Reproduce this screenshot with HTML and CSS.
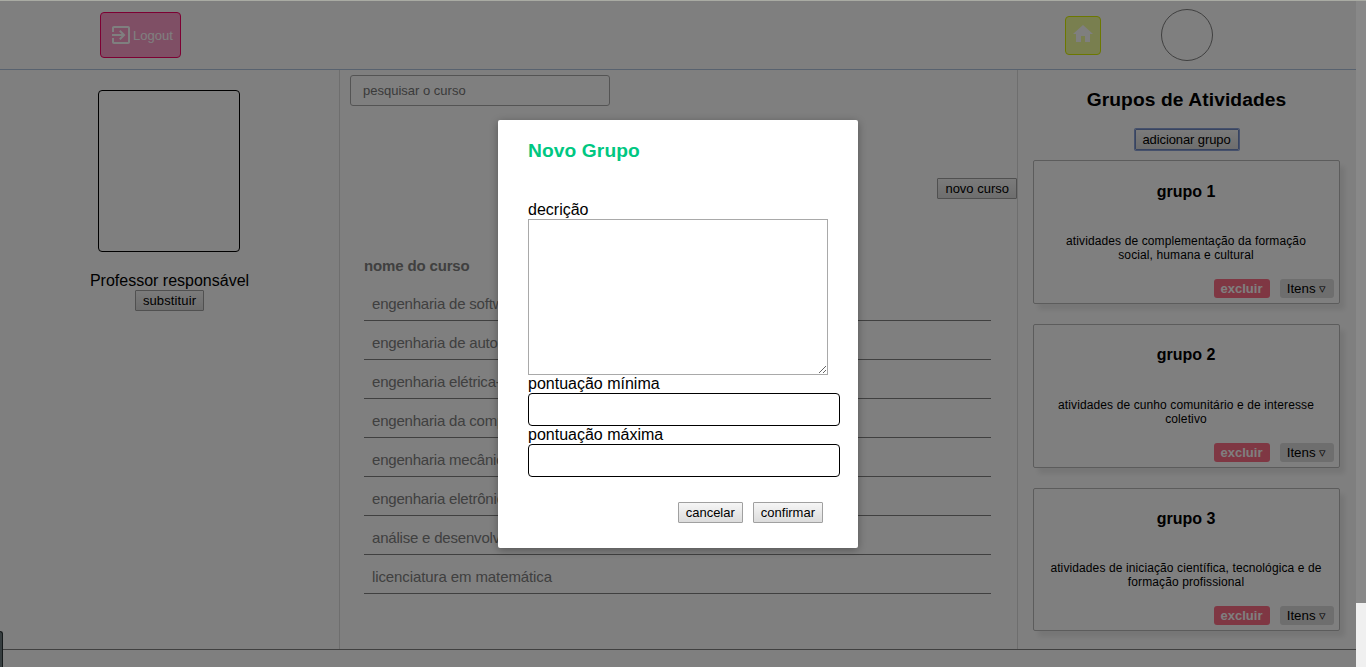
FILE: index.html
```html
<!DOCTYPE html>
<html lang="pt-BR">
<head>
<meta charset="utf-8">
<title>Cursos</title>
<link rel="stylesheet" href="styles.css">
</head>
<body>
<div class="app">
  <header class="header">
    <button class="logout">
      <svg width="24" height="24" viewBox="0 0 24 24" fill="currentColor"><path d="M10.09 15.59L11.5 17l5-5-5-5-1.41 1.41L12.67 11H3v2h9.67l-2.58 2.59zM19 3H5c-1.11 0-2 .9-2 2v4h2V5h14v14H5v-4H3v4c0 1.1.89 2 2 2h14c1.1 0 2-.9 2-2V5c0-1.1-.9-2-2-2z"/></svg><span>Logout</span>
    </button>
    <div class="header-right">
      <a class="home"><svg width="24" height="24" viewBox="0 0 24 24" fill="currentColor"><path d="M10 20v-6h4v6h5v-8h3L12 3 2 12h3v8z"/></svg></a>
      <div class="avatar"></div>
    </div>
  </header>
  <main class="columns">
    <aside class="professor">
      <div class="photo"></div>
      <div class="professor-name">Professor responsável</div>
      <button class="btn wide">substituir</button>
    </aside>
    <section class="courses">
      <input class="search" placeholder="pesquisar o curso">
      <div class="toolbar"><button class="btn">novo curso</button></div>
      <div class="course-table">
        <div class="table-head">nome do curso</div>
        <div class="course">engenharia de software</div>
        <div class="course">engenharia de automação</div>
        <div class="course">engenharia elétrica-eletrônica</div>
        <div class="course">engenharia da computação</div>
        <div class="course">engenharia mecânica</div>
        <div class="course">engenharia eletrônica</div>
        <div class="course">análise e desenvolvimento de sistemas</div>
        <div class="course">licenciatura em matemática</div>
      </div>
    </section>
    <aside class="groups">
      <h2 class="groups-title">Grupos de Atividades</h2>
      <button class="btn focused">adicionar grupo</button>
      <div class="cards">
        <article class="card">
          <h3 class="card-title">grupo 1</h3>
          <p class="card-text">atividades de complementação da formação social, humana e cultural</p>
          <div class="card-actions"><button class="chip danger">excluir</button><button class="chip">Itens ▿</button></div>
        </article>
        <article class="card">
          <h3 class="card-title">grupo 2</h3>
          <p class="card-text">atividades de cunho comunitário e de interesse coletivo</p>
          <div class="card-actions"><button class="chip danger">excluir</button><button class="chip">Itens ▿</button></div>
        </article>
        <article class="card last">
          <h3 class="card-title">grupo 3</h3>
          <p class="card-text">atividades de iniciação científica, tecnológica e de formação profissional</p>
          <div class="card-actions"><button class="chip danger">excluir</button><button class="chip">Itens ▿</button></div>
        </article>
      </div>
    </aside>
  </main>
  <div class="overlay">
    <form class="modal">
      <h2 class="modal-title">Novo Grupo</h2>
      <label class="label">decrição</label>
      <textarea class="area"></textarea>
      <label class="label">pontuação mínima</label>
      <input class="field">
      <label class="label">pontuação máxima</label>
      <input class="field">
      <div class="modal-actions"><button type="button" class="btn">cancelar</button><button type="button" class="btn">confirmar</button></div>
    </form>
  </div>
  <div class="side-tab"></div>
</div>
<div class="scrollbar"><div class="thumb"></div></div>
</body>
</html>
```
FILE: styles.css
```css
* { box-sizing: border-box; }
body {
  margin: 0;
  height: 667px;
  display: flex;
  overflow: hidden;
  background: #fff;
  color: #000;
  font: 16px/18px "Liberation Sans", Arial, sans-serif;
}
button, input, textarea { font-family: inherit; margin: 0; }
.app {
  position: relative;
  width: 1356px;
  height: 667px;
  border-top: 1px solid #a9aba3;
}
.header {
  height: 69px;
  padding: 0 143px 0 100px;
  display: flex;
  justify-content: space-between;
  align-items: center;
  border-bottom: 1px solid #b0c4de;
}
.logout {
  width: 81px;
  height: 46px;
  padding: 0 0 0 8px;
  display: flex;
  align-items: center;
  border: 1px solid #fa0066;
  border-radius: 4px;
  background: #ff9fcb;
  color: #fff;
  font-size: 13px;
}
.logout svg { flex: none; }
.header-right { display: flex; align-items: center; gap: 60px; }
.home {
  width: 36px;
  height: 39px;
  padding: 5px 0 0 5px;
  border: 1px solid #d8f000;
  border-radius: 4px;
  background: #f3ff9f;
  color: #fff;
}
.home svg { display: block; }
.avatar {
  width: 52px;
  height: 52px;
  border: 1px solid #808080;
  border-radius: 50%;
}
.columns {
  height: 580px;
  display: grid;
  grid-template-columns: 340px 677px 339px;
  border-bottom: 1px solid #808080;
}
.professor {
  padding-top: 20px;
  display: flex;
  flex-direction: column;
  align-items: center;
  border-right: 1px solid #dcdcdc;
}
.photo {
  width: 142px;
  height: 162px;
  margin: 0 1px 20px 0;
  border: 1px solid #000;
  border-radius: 4px;
}
.btn {
  height: 21px;
  padding: 0 7px;
  border: 1px solid #a0a0a0;
  border-radius: 1px;
  background: linear-gradient(#f6f6f6, #dcdcdc);
  color: #000;
  font-size: 13px;
  line-height: 19px;
  white-space: nowrap;
}
.wide { width: 69px; padding: 0; letter-spacing: .12px; }
.focused {
  width: 104px;
  padding: 0;
  border-color: #7088c0;
  letter-spacing: -.1px;
  box-shadow: 0 0 0 1px #8ca2d8;
}
.search {
  display: block;
  width: 260px;
  height: 31px;
  margin: 5px 0 0 10px;
  padding: 0 12px;
  border: 1px solid #a9a9a9;
  border-radius: 3px;
  background: #fff;
  font-size: 13px;
}
.search::placeholder { color: #757575; }
.toolbar { margin-top: 72px; display: flex; justify-content: flex-end; }
.course-table {
  margin: 58px 26px 0 24px;
  color: #808080;
  font-size: 15px;
}
.table-head { height: 25px; font-weight: bold; letter-spacing: -.15px; }
.course {
  height: 39px;
  padding: 13px 8px 0;
  border-bottom: 1px solid #808080;
  letter-spacing: -.2px;
}
.course:last-child { letter-spacing: -.1px; }
.groups {
  padding: 19px 1px 0 0;
  display: flex;
  flex-direction: column;
  align-items: center;
  border-left: 1px solid #dcdcdc;
}
.groups-title { margin: 0 0 18px; font-size: 19.2px; line-height: 22px; letter-spacing: .1px; }
.cards {
  width: 307px;
  margin: 10px 1px 0 0;
  display: flex;
  flex-direction: column;
  gap: 20px;
}
.card {
  height: 144px;
  padding: 22px 5px 5px;
  display: flex;
  flex-direction: column;
  border: 1px solid #b8b8b8;
  border-radius: 2px;
  box-shadow: 5px 6px 5px rgba(0, 0, 0, .08);
  text-align: center;
}
.last { height: 143px; }
.card:not(:first-child) { padding-top: 21px; }
.card-title { margin: 0; font-size: 16px; line-height: 18px; }
.card-text { margin: auto 10px 17px; font-size: 12px; line-height: 14px; letter-spacing: .11px; }
.card-actions { display: flex; justify-content: flex-end; gap: 10px; }
.chip {
  width: 54px;
  height: 19px;
  padding: 0;
  border: 0;
  border-radius: 3px;
  background: #dcdcdc;
  color: #000;
  font-size: 13.333px;
  line-height: 19px;
  white-space: nowrap;
}
.danger { width: 56px; background: #ff6f87; color: #fff; font-size: 13px; font-weight: bold; }
.overlay {
  position: absolute;
  inset: 0;
  display: flex;
  justify-content: center;
  align-items: flex-start;
  padding-top: 119px;
  background: rgba(0, 0, 0, .5);
}
.modal {
  width: 360px;
  height: 428px;
  padding: 20px 18px 0 30px;
  border-radius: 2px;
  background: #fff;
  box-shadow: 0 2px 8px rgba(0, 0, 0, .33);
}
.modal-title { margin: 0 0 39px; color: #00c781; font-size: 19.2px; line-height: 22px; letter-spacing: .1px; }
.label { display: block; height: 18px; }
.area {
  display: block;
  width: 300px;
  height: 156px;
  border: 1px solid #a9a9a9;
  border-radius: 0;
  outline: none;
  resize: both;
}
.field {
  display: block;
  width: 312px;
  height: 33px;
  border: 1px solid #000;
  border-radius: 4px;
  background: #fff;
}
.modal-actions { margin: 25px 17px 0 0; display: flex; justify-content: flex-end; gap: 10px; }
.side-tab {
  position: absolute;
  left: 0;
  bottom: 0;
  width: 3px;
  height: 36px;
  border: solid #151a1b;
  border-width: 1px 1px 0 0;
  border-radius: 0 3px 0 0;
  background: #373e40;
}
.scrollbar { width: 10px; background: #f0f0f0; }
.thumb { height: 603px; border-top: 1px solid #a9aba3; background: #888; }
```
